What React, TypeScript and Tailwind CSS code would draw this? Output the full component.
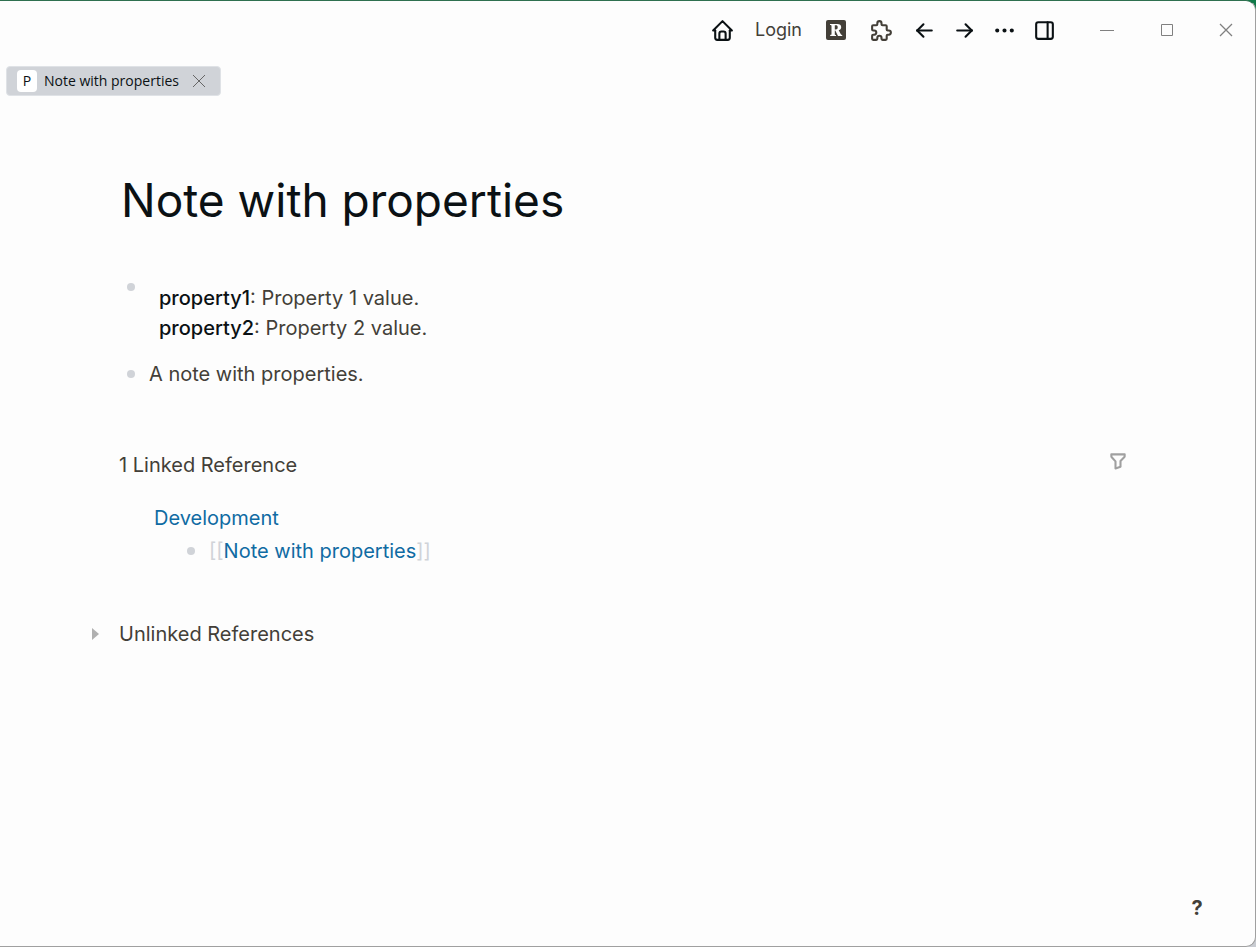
import type { ReactNode } from "react";
import {
  TbArrowLeft,
  TbArrowRight,
  TbDots,
  TbFilter,
  TbHome,
  TbLayoutSidebarRight,
  TbPuzzle,
} from "react-icons/tb";

function ToolButton({ label, className, children }: { label: string; className: string; children: ReactNode }) {
  return (
    <button type="button" aria-label={label} className={`flex h-10 items-center justify-center ${className}`}>
      {children}
    </button>
  );
}

function ReadwiseMark() {
  return (
    <svg width="20" height="20" viewBox="0 0 20 20" aria-hidden="true">
      <rect width="20" height="20" rx="2" fill="#433f38" />
      <path
        fill="#fdfdfd"
        fillRule="evenodd"
        d="M4 4h7.2c2.6 0 4 1.1 4 3.2 0 1.6-.9 2.6-2.5 3l2 3.900c.3.6.7.8 1.500.9v1h-4.200l-2.700-5.400h-.5v3.600c0 .6.3.8 1.200.8v1H4.200v-1c1 0 1.300-.2 1.300-.9V6c0-.7-.4-.9-1.500-.9zM8.800 5.200v4.200h.9c1.400 0 2-.7 2-2.200 0-1.400-.6-2-1.900-2z"
      />
    </svg>
  );
}

function Header() {
  return (
    <header className="flex h-[58px] items-center justify-end text-[#0b1114]">
      <ToolButton label="Home" className="w-10">
        <TbHome size={25} />
      </ToolButton>
      <button type="button" className="ml-3 text-lg text-[#433f38]">
        Login
      </button>
      <ToolButton label="Readwise" className="ml-[18px] w-8">
        <ReadwiseMark />
      </ToolButton>
      <ToolButton label="Plugins" className="ml-[6px] w-[46px] text-[#433f38]">
        <TbPuzzle size={25} />
      </ToolButton>
      <ToolButton label="Go back" className="w-10">
        <TbArrowLeft size={25} />
      </ToolButton>
      <ToolButton label="Go forward" className="w-10">
        <TbArrowRight size={25} />
      </ToolButton>
      <ToolButton label="More" className="w-10">
        <TbDots size={25} />
      </ToolButton>
      <ToolButton label="Toggle right sidebar" className="w-10">
        <TbLayoutSidebarRight size={25} />
      </ToolButton>
      <div className="ml-[13px] flex text-[#808080]">
        <ToolButton label="Minimize" className="w-[60px]">
          <svg width="14" height="14" viewBox="0 0 14 14" stroke="currentColor" aria-hidden="true">
            <path d="M0 7.500h14" />
          </svg>
        </ToolButton>
        <ToolButton label="Maximize" className="w-[60px]">
          <svg width="14" height="14" viewBox="0 0 14 14" fill="none" stroke="currentColor" aria-hidden="true">
            <path d="M1.500 1.500h11v11h-11z" />
          </svg>
        </ToolButton>
        <ToolButton label="Close" className="w-[58px]">
          <svg width="14" height="14" viewBox="0 0 14 14" stroke="currentColor" strokeWidth="1.300" aria-hidden="true">
            <path d="M1 1l12 12M13 1L1 13" />
          </svg>
        </ToolButton>
      </div>
    </header>
  );
}

function Tabs() {
  return (
    <nav className="flex px-1.5 pt-[7px]" aria-label="Open pages">
      <div className="flex h-[30px] items-center rounded border border-[#dfe2e6] bg-[#d0d3d8] pr-3.5 pl-2.5 font-['Open_Sans','Noto_Sans',sans-serif] text-sm text-[#0b1114]">
        <span className="flex h-[22px] w-5 items-center justify-center rounded bg-white">P</span>
        <a href="#page" className="ml-[7px]">
          Note with properties
        </a>
        <button type="button" aria-label="Close tab" className="ml-[13px] text-[#666]">
          <svg width="14" height="14" viewBox="0 0 14 14" stroke="currentColor" aria-hidden="true">
            <path d="M1 1l12 12M13 1L1 13" />
          </svg>
        </button>
      </div>
    </nav>
  );
}

function Bullet() {
  return <span className="h-2 w-2 shrink-0 rounded-full bg-[#d0d3d8]" />;
}

function Property({ name, value }: { name: string; value: string }) {
  return (
    <div>
      <span className="font-medium text-[#0b1114]">{name}</span>: {value}
    </div>
  );
}

export default function App() {
  return (
    <div className="bg-[#c9ccd2] bg-[linear-gradient(#0f7a48,#0f7a48)] bg-size-[100%_12px] bg-no-repeat font-['Inter',sans-serif] text-xl leading-[30px] text-[#433f38]">
      <div className="flex min-h-screen flex-col rounded-r-[10px] border-t border-r border-b border-t-[#2f7050] border-r-[#a0a0a0] border-b-[#a0a0a0] bg-[#fdfdfd]">
        <Header />
        <Tabs />
        <main className="flex-1 pt-[77px] pr-[127px] pl-[119px]">
          <h1 className="pl-0.5 text-[46px] leading-[54px] text-[#0b1114]">Note with properties</h1>

          <ul className="mt-12 pl-2">
            <li className="flex items-start">
              <span className="flex h-6 items-center">
                <Bullet />
              </span>
              <div className="pt-2 pb-2 pl-6">
                <Property name="property1" value="Property 1 value." />
                <Property name="property2" value="Property 2 value." />
              </div>
            </li>
            <li className="mt-2 flex items-center">
              <Bullet />
              <p className="pl-3.5">A note with properties.</p>
            </li>
          </ul>

          <section className="mt-[61px]">
            <div className="flex items-center justify-between">
              <h2>1 Linked Reference</h2>
              <button type="button" aria-label="Filter references" className="pb-2 text-[#a0a0a0]">
                <TbFilter size={20} strokeWidth={2.5} />
              </button>
            </div>
            <div className="pt-[23px] pl-[35px]">
              <a href="#development" className="text-[#106ba3]">
                Development
              </a>
              <div className="mt-[3px] flex items-center pl-[33px]">
                <Bullet />
                <p className="pl-3.5 text-[#d0d3d8]">
                  [[
                  <a href="#page" className="text-[#106ba3]">
                    Note with properties
                  </a>
                  ]]
                </p>
              </div>
            </div>
          </section>

          <section className="mt-[53px] -ml-7">
            <button type="button" className="flex items-center">
              <svg width="8" height="12" viewBox="0 0 8 12" fill="#b0b0b0" aria-hidden="true">
                <path d="M1 0v12l7-6z" />
              </svg>
              <span className="pl-5">Unlinked References</span>
            </button>
          </section>
        </main>
        <footer className="flex justify-end pr-[43px] pb-[23px]">
          <button type="button" aria-label="Help" className="w-[30px] font-bold">
            ?
          </button>
        </footer>
      </div>
    </div>
  );
}
